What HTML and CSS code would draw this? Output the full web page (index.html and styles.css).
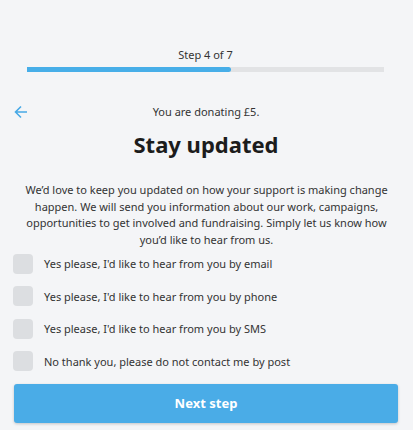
FILE: index.html
```html
<html>
<head>
    <title>Stay updated</title>
    <link rel="stylesheet" href="styles.css">
</head>
<body>
    <div class="progress">
        <div class="progress-label">Step 4 of 7</div>
        <div class="progress-track">
            <div class="progress-fill" style="width: 57.14%;"></div>
        </div>
    </div>

    <div class="donating">
        <a class="back" href="#">
            <svg width="14" height="14" viewBox="0 0 14 14">
                <path d="M13 7H1.5M7 1.5L1.5 7L7 12.5" fill="none" stroke="#47a9e6" stroke-width="1.6"/>
            </svg>
        </a>
        <span>You are donating £5.</span>
    </div>

    <h1>Stay updated</h1>

    <p class="intro">We’d love to keep you updated on how your support is making change happen. We will send you information about our work, campaigns, opportunities to get involved and fundraising. Simply let us know how you’d like to hear from us.</p>

    <form class="options">
        <label class="option"><input type="checkbox"><span class="box"></span>Yes please, I'd like to hear from you by email</label>
        <label class="option"><input type="checkbox"><span class="box"></span>Yes please, I'd like to hear from you by phone</label>
        <label class="option"><input type="checkbox"><span class="box"></span>Yes please, I'd like to hear from you by SMS</label>
        <label class="option"><input type="checkbox"><span class="box"></span>No thank you, please do not contact me by post</label>
        <button type="button" class="next">Next step</button>
    </form>
</body>
</html>
```

FILE: styles.css
```css
body {
    margin: 0;
    background-color: #f4f5f7;
    font-family: "Noto Sans", sans-serif;
    color: #333;
    padding: 0 15px 0 14px;
}

.progress {
    padding: 46px 14px 0 13px;
}

.progress-label {
    text-align: center;
    font-size: 11px;
    line-height: 17px;
    color: #333;
}

.progress-track {
    margin-top: 4px;
    height: 5px;
    background-color: #e2e3e5;
}

.progress-fill {
    height: 5px;
    background-color: #47aee8;
    border-radius: 0 3px 3px 0;
}

.donating {
    position: relative;
    margin-top: 31px;
    text-align: center;
    font-size: 11px;
    line-height: 17px;
}

.back {
    position: absolute;
    left: 0;
    top: 2px;
    line-height: 0;
}

h1 {
    margin: 9px 0 0 0;
    text-align: center;
    font-size: 22px;
    line-height: 30px;
    font-weight: bold;
    color: #1c1c1c;
}

.intro {
    margin: 23px 7px 0 8px;
    text-align: center;
    font-size: 11px;
    line-height: 16.7px;
    color: #333;
}

.options {
    margin: 5px 0 0 0;
}

.option {
    display: flex;
    align-items: center;
    height: 20px;
    margin-bottom: 12.5px;
    font-size: 11px;
    color: #333;
    cursor: pointer;
}

.option input {
    display: none;
}

.box {
    width: 20px;
    height: 20px;
    border-radius: 4px;
    background-color: #dcdee1;
    margin: 0 11px 0 -1px;
    flex-shrink: 0;
}

.next {
    display: block;
    width: 100%;
    height: 39px;
    margin-top: 0;
    background-color: #4aace7;
    color: #fff;
    border: none;
    border-radius: 3px;
    font-family: "Noto Sans", sans-serif;
    font-size: 13px;
    font-weight: bold;
    box-shadow: 0 1px 3px rgba(0, 0, 0, 0.2);
    cursor: pointer;
}
```
